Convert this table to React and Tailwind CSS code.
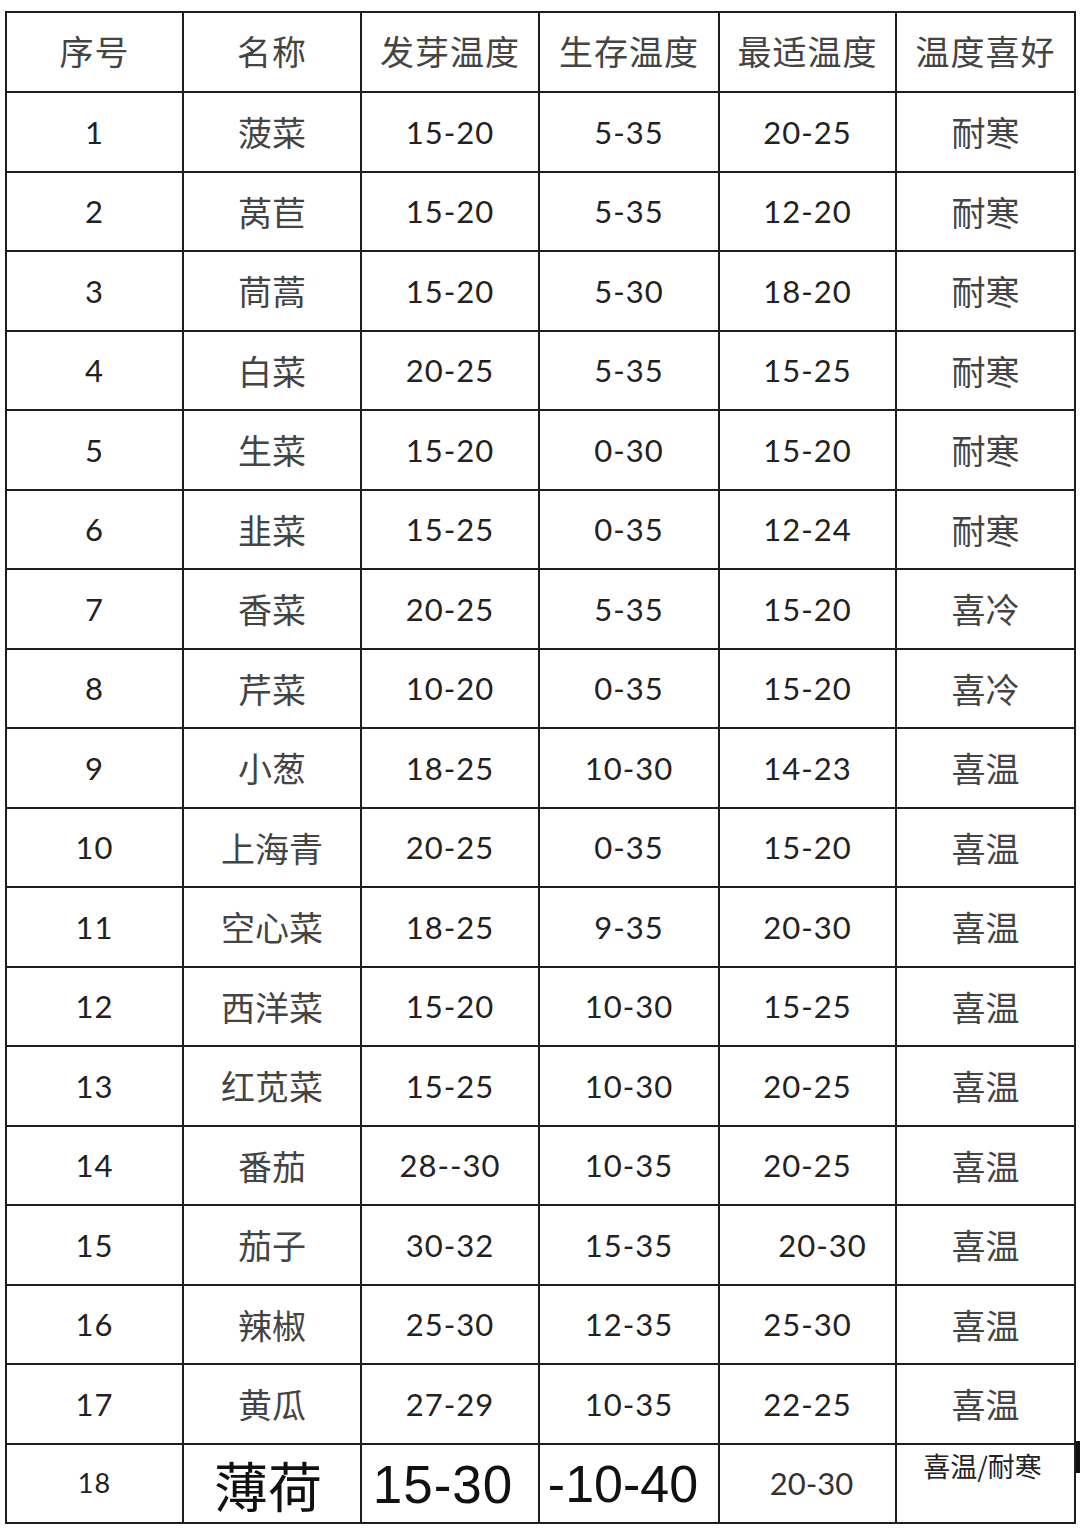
import React from 'react';

// Vegetable temperature table
const headers = ['序号', '名称', '发芽温度', '生存温度', '最适温度', '温度喜好'];

const rows = [
  ['1', '菠菜', '15-20', '5-35', '20-25', '耐寒'],
  ['2', '莴苣', '15-20', '5-35', '12-20', '耐寒'],
  ['3', '茼蒿', '15-20', '5-30', '18-20', '耐寒'],
  ['4', '白菜', '20-25', '5-35', '15-25', '耐寒'],
  ['5', '生菜', '15-20', '0-30', '15-20', '耐寒'],
  ['6', '韭菜', '15-25', '0-35', '12-24', '耐寒'],
  ['7', '香菜', '20-25', '5-35', '15-20', '喜冷'],
  ['8', '芹菜', '10-20', '0-35', '15-20', '喜冷'],
  ['9', '小葱', '18-25', '10-30', '14-23', '喜温'],
  ['10', '上海青', '20-25', '0-35', '15-20', '喜温'],
  ['11', '空心菜', '18-25', '9-35', '20-30', '喜温'],
  ['12', '西洋菜', '15-20', '10-30', '15-25', '喜温'],
  ['13', '红苋菜', '15-25', '10-30', '20-25', '喜温'],
  ['14', '番茄', '28--30', '10-35', '20-25', '喜温'],
  ['15', '茄子', '30-32', '15-35', '20-30', '喜温'],
  ['16', '辣椒', '25-30', '12-35', '25-30', '喜温'],
  ['17', '黄瓜', '27-29', '10-35', '22-25', '喜温'],
];

const cjk = "font-['Noto_Sans_CJK_SC',sans-serif]";
const num = "font-['Lato','Liberation_Sans',sans-serif]";
const cell = 'border-2 border-[#1e1e1e] text-center align-middle p-0';

export default function App() {
  return (
    <div className="w-[1080px] h-[1538px] bg-white pt-[11px] pl-[5px]">
      <table className="table-fixed border-collapse w-[1069px]">
        <colgroup>
          <col className="w-[177px]" />
          <col className="w-[178px]" />
          <col className="w-[178px]" />
          <col className="w-[180px]" />
          <col className="w-[177px]" />
          <col className="w-[179px]" />
        </colgroup>
        <thead>
          <tr className="h-[80px]">
            {headers.map((h) => (
              <th key={h} className={`${cell} ${cjk} font-normal text-[34px] text-[#444] tracking-[1px]`}>
                <span className="relative top-[-2px]">{h}</span>
              </th>
            ))}
          </tr>
        </thead>
        <tbody>
          {rows.map((r) => (
            <tr key={r[0]} className="h-[79.5px]">
              <td className={`${cell} ${num} text-[31px] text-[#222] tracking-[1px]`}>{r[0]}</td>
              <td className={`${cell} ${cjk} font-normal text-[34px] text-[#444]`}>{r[1]}</td>
              <td className={`${cell} ${num} text-[31px] text-[#222] tracking-[1px]`}>{r[2]}</td>
              <td className={`${cell} ${num} text-[31px] text-[#222] tracking-[1px]`}>{r[3]}</td>
              <td className={`${cell} ${num} text-[31px] text-[#222] tracking-[1px]`}>
                {r[0] === '15' ? <span className="pl-[30px]">{r[4]}</span> : r[4]}
              </td>
              <td className={`${cell} ${cjk} font-normal text-[34px] text-[#444]`}>{r[5]}</td>
            </tr>
          ))}
          <tr className="h-[79.5px]">
            <td className={`${cell} ${num} text-[27px] text-[#222] tracking-[1px]`}>18</td>
            <td className={`${cell} ${cjk} text-[54px] text-[#111] leading-none`}>
              <span className="inline-block pt-[4px] pr-[8px]">薄荷</span>
            </td>
            <td className={`${cell} font-['Liberation_Sans',sans-serif] text-[53px] text-[#111] leading-none`}>
              <span className="inline-block pt-[2px] pr-[14px] tracking-[1px]">15-30</span>
            </td>
            <td className={`${cell} font-['Liberation_Sans',sans-serif] text-[52px] text-[#111] leading-none`}>
              <span className="inline-block pt-[2px] pr-[12px]">-10-40</span>
            </td>
            <td className={`${cell} ${num} text-[31px] text-[#333]`}>
              <span className="inline-block pl-[8px]">20-30</span>
            </td>
            <td className={`${cell} relative align-top`}>
              <div className={`${cjk} text-[27px] text-[#222] leading-none pt-[7px] pr-[6px]`}>喜温/耐寒</div>
              <span className="absolute right-[-7px] top-[-4px] w-[5px] h-[32px] bg-[#111]" />
            </td>
          </tr>
        </tbody>
      </table>
    </div>
  );
}
